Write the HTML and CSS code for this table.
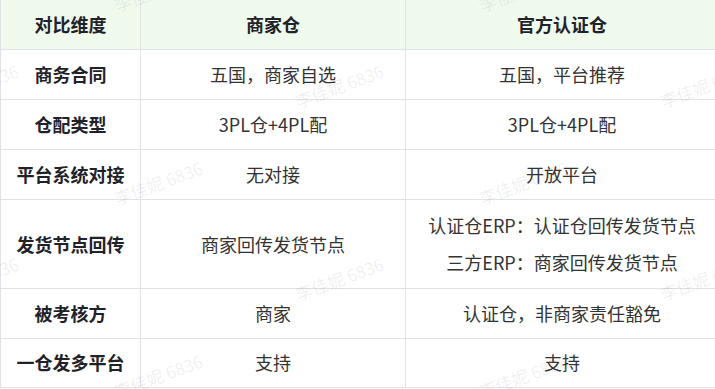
FILE: index.html
```html
<!DOCTYPE html>
<html lang="zh">
<head>
<meta charset="utf-8">
<link rel="stylesheet" href="styles.css">
</head>
<body>
<div class="page">
  <div class="grid">
    <div class="cell head">对比维度</div>
    <div class="cell head">商家仓</div>
    <div class="cell head">官方认证仓</div>

    <div class="cell key">商务合同</div>
    <div class="cell">五国，商家自选</div>
    <div class="cell">五国，平台推荐</div>

    <div class="cell key">仓配类型</div>
    <div class="cell">3PL仓+4PL配</div>
    <div class="cell">3PL仓+4PL配</div>

    <div class="cell key">平台系统对接</div>
    <div class="cell">无对接</div>
    <div class="cell">开放平台</div>

    <div class="cell key">发货节点回传</div>
    <div class="cell">商家回传发货节点</div>
    <div class="cell multi"><p>认证仓ERP：认证仓回传发货节点</p><p>三方ERP：商家回传发货节点</p></div>

    <div class="cell key">被考核方</div>
    <div class="cell">商家</div>
    <div class="cell">认证仓，非商家责任豁免</div>

    <div class="cell key last">一仓发多平台</div>
    <div class="cell last">支持</div>
    <div class="cell last">支持</div>
  </div>

  <div class="watermarks" aria-hidden="true">
    <span class="wm" style="left:112px;top:-20px">李佳妮 6836</span>
    <span class="wm" style="left:477px;top:-20px">李佳妮 6836</span>
    <span class="wm" style="left:-72px;top:76px">李佳妮 6836</span>
    <span class="wm" style="left:293px;top:76px">李佳妮 6836</span>
    <span class="wm" style="left:658px;top:76px">李佳妮 6836</span>
    <span class="wm" style="left:112px;top:173px">李佳妮 6836</span>
    <span class="wm" style="left:477px;top:173px">李佳妮 6836</span>
    <span class="wm" style="left:-72px;top:269px">李佳妮 6836</span>
    <span class="wm" style="left:293px;top:269px">李佳妮 6836</span>
    <span class="wm" style="left:658px;top:269px">李佳妮 6836</span>
    <span class="wm" style="left:112px;top:366px">李佳妮 6836</span>
    <span class="wm" style="left:477px;top:366px">李佳妮 6836</span>
  </div>
</div>
</body>
</html>
```
FILE: styles.css
```css
html, body {
  margin: 0;
  padding: 0;
  background: #ffffff;
  overflow: hidden;
}

body {
  font-family: "Noto Sans CJK SC", "Noto Sans", sans-serif;
  font-size: 18px;
  color: #333333;
}

.page {
  position: relative;
  width: 715px;
  height: 389px;
  overflow: hidden;
}

.grid {
  display: grid;
  grid-template-columns: 140px 265px 313px;
  width: 719px;
  border-left: 1px solid #dfe2e6;
}

.cell {
  box-sizing: border-box;
  min-height: 50px;
  padding: 11px 8px;
  line-height: 27px;
  text-align: center;
  border-right: 1px solid #dfe2e6;
  border-bottom: 1px solid #dfe2e6;
  display: flex;
  flex-direction: column;
  justify-content: center;
  align-items: center;
  white-space: nowrap;
}

.cell.last {
  min-height: 49px;
  padding-top: 10px;
  padding-bottom: 11px;
}

.head {
  background: #effaed;
  font-weight: 700;
  color: #1f2329;
}

.key {
  font-weight: 700;
  color: #1f2329;
}

.multi {
  gap: 10px;
  padding-top: 12px;
  padding-bottom: 12px;
}

.multi p {
  margin: 0;
}

.watermarks {
  position: absolute;
  inset: 0;
  pointer-events: none;
}

.wm {
  position: absolute;
  font-size: 17px;
  line-height: 20px;
  white-space: nowrap;
  color: rgba(0, 0, 0, 0.075);
  transform: rotate(-20deg);
  transform-origin: center;
}
```
